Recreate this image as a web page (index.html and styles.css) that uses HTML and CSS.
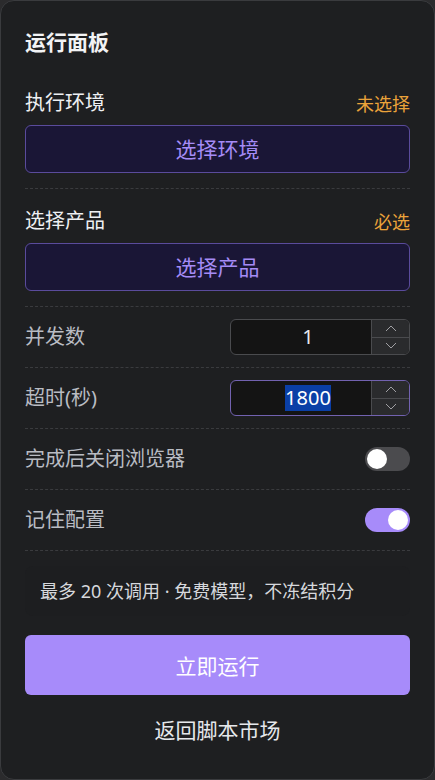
FILE: index.html
```html
<!DOCTYPE html>
<html lang="zh-CN">
<head>
<meta charset="utf-8">
<title>运行面板</title>
<link rel="stylesheet" href="styles.css">
</head>
<body>
<div class="card">
  <h1 class="title">运行面板</h1>

  <div class="section">
    <div class="label-row">
      <span class="label strong">执行环境</span>
      <span class="status">未选择</span>
    </div>
    <button class="pick-btn">选择环境</button>
  </div>

  <div class="section">
    <div class="label-row">
      <span class="label strong">选择产品</span>
      <span class="status">必选</span>
    </div>
    <button class="pick-btn">选择产品</button>
  </div>

  <div class="row">
    <span class="label">并发数</span>
    <div class="num">
      <div class="num-field"><span class="num-val">1</span></div>
      <div class="spin">
        <div class="spin-btn"><svg width="12" height="7" viewBox="0 0 12 7"><path d="M1 6 L6 1 L11 6" fill="none" stroke="#a0a0a4" stroke-width="1"/></svg></div>
        <div class="spin-btn"><svg width="12" height="7" viewBox="0 0 12 7"><path d="M1 1 L6 6 L11 1" fill="none" stroke="#a0a0a4" stroke-width="1"/></svg></div>
      </div>
    </div>
  </div>

  <div class="row">
    <span class="label">超时(秒)</span>
    <div class="num focused">
      <div class="num-field"><span class="num-val selected">1800</span></div>
      <div class="spin">
        <div class="spin-btn"><svg width="12" height="7" viewBox="0 0 12 7"><path d="M1 6 L6 1 L11 6" fill="none" stroke="#a0a0a4" stroke-width="1"/></svg></div>
        <div class="spin-btn"><svg width="12" height="7" viewBox="0 0 12 7"><path d="M1 1 L6 6 L11 1" fill="none" stroke="#a0a0a4" stroke-width="1"/></svg></div>
      </div>
    </div>
  </div>

  <div class="row">
    <span class="label">完成后关闭浏览器</span>
    <span class="toggle"><span class="knob"></span></span>
  </div>

  <div class="row">
    <span class="label">记住配置</span>
    <span class="toggle on"><span class="knob"></span></span>
  </div>

  <div class="info">最多 20 次调用 · 免费模型，不冻结积分</div>

  <button class="run-btn">立即运行</button>
  <div class="back">返回脚本市场</div>
</div>
</body>
</html>
```

FILE: styles.css
```css
* { box-sizing: border-box; }
html, body {
  margin: 0;
  padding: 0;
  background: #2b2b2d;
}
body {
  font-family: "Noto Sans", "Noto Sans CJK SC", sans-serif;
  color: #e8eaee;
}
.card {
  width: 435px;
  height: 780px;
  background: #1e1f21;
  border: 1px solid #3a3b3e;
  border-radius: 14px;
  padding: 27px 24px 0 24px;
  display: flex;
  flex-direction: column;
}
.title {
  margin: 0 0 15px 0;
  font-size: 21px;
  line-height: 28px;
  font-weight: 700;
  color: #f2f3f5;
}
.section {
  padding: 16px 0 15px 0;
  border-bottom: 1px dashed #3a3b3e;
  display: flex;
  flex-direction: column;
  gap: 10px;
}
.label-row {
  height: 28px;
  padding-top: 3px;
  display: flex;
  align-items: center;
  justify-content: space-between;
}
.label {
  font-size: 20px;
  line-height: 28px;
  color: #b9bcc3;
}
.label.strong { color: #eef0f3; }
.status {
  font-size: 18px;
  color: #eba33a;
}
.pick-btn {
  height: 48px;
  width: 100%;
  background: #1a1636;
  border: 1px solid #5a4b9c;
  border-radius: 6px;
  color: #a58cf6;
  font-family: inherit;
  font-size: 21px;
  padding: 0 0 3px 0;
  cursor: pointer;
}
.row {
  padding: 12px 0;
  min-height: 61px;
  border-bottom: 1px dashed #3a3b3e;
  display: flex;
  align-items: center;
  justify-content: space-between;
}
.num {
  width: 180px;
  height: 36px;
  border: 1px solid #4a4b4e;
  border-radius: 6px;
  display: flex;
  overflow: hidden;
  background: #141414;
}
.num.focused { border: 1.5px solid #7262b0; }
.num-field {
  flex: 1;
  display: flex;
  align-items: center;
  justify-content: center;
  padding-left: 14px;
}
.num-val {
  font-size: 20px;
  line-height: 26px;
  color: #e8eaee;
}
.num-val.selected {
  background: #0a3fa6;
  color: #ffffff;
}
.spin {
  width: 38px;
  border-left: 1px solid #4a4b4e;
  background: #2a2b2d;
  display: flex;
  flex-direction: column;
}
.spin-btn {
  flex: 1;
  display: flex;
  align-items: center;
  justify-content: center;
}
.spin-btn + .spin-btn { border-top: 1px solid #4a4b4e; }
.toggle {
  width: 45px;
  height: 24px;
  border-radius: 12px;
  background: #4b4b4e;
  display: flex;
  align-items: center;
  padding: 0 2px;
}
.toggle.on {
  background: #a78bfa;
  justify-content: flex-end;
}
.knob {
  width: 20px;
  height: 20px;
  border-radius: 50%;
  background: #ffffff;
}
.info {
  margin-top: 15px;
  padding: 12px 15px;
  font-size: 18px;
  line-height: 26px;
  color: #d6d8dc;
  background: #1d1e20;
  border-radius: 8px;
}
.run-btn {
  margin-top: 19px;
  height: 60px;
  width: 100%;
  border: none;
  border-radius: 6px;
  background: #a78bfa;
  color: #ffffff;
  font-family: inherit;
  font-size: 21px;
  cursor: pointer;
}
.back {
  margin-top: 23px;
  text-align: center;
  font-size: 21px;
  line-height: 24px;
  color: #e6e8ec;
}
```
